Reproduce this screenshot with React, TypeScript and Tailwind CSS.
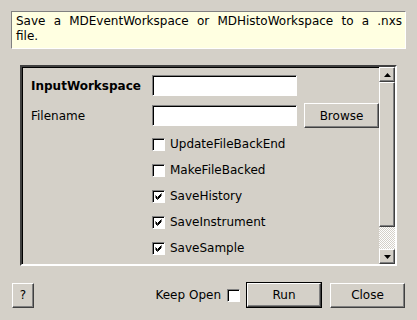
import React from "react";

const raised =
  "border border-t-white border-l-white border-b-[#404040] border-r-[#404040] shadow-[inset_-1px_-1px_#808080] bg-[#d4d0c8]";
const sunken =
  "border border-t-[#808080] border-l-[#808080] border-b-white border-r-white shadow-[inset_1px_1px_#000000]";

function Check({ checked }: { checked?: boolean }) {
  return (
    <div className={`w-[13px] h-[13px] bg-white flex items-center justify-center ${sunken}`}>
      {checked && (
        <svg width="9" height="9" viewBox="0 0 9 9">
          <path d="M1.5 3.5 L3.5 5.5 L7.5 1.5 M1.5 4.5 L3.5 6.5 L7.5 2.5 M1.5 5.5 L3.5 7.5 L7.5 3.5" stroke="#000" strokeWidth="1" fill="none" />
        </svg>
      )}
    </div>
  );
}

function CheckRow({ label, checked }: { label: string; checked?: boolean }) {
  return (
    <div className="h-[26px] flex items-center pl-[121px]">
      <Check checked={checked} />
      <span className="ml-[5px]">{label}</span>
    </div>
  );
}

export default function App() {
  return (
    <div className="w-[417px] h-[320px] bg-[#d4d0c8] flex flex-col font-['DejaVu_Sans',sans-serif] text-[12px] text-black overflow-hidden">
      <div className="mt-[11px] mx-[11px] h-[38px] bg-[#ffffe1] border border-t-[#808080] border-l-[#808080] border-b-white border-r-white pl-[4px] pr-[3px] pt-[2px] leading-[15px]">
        <div className="text-justify [text-align-last:justify]">Save a MDEventWorkspace or MDHistoWorkspace to a .nxs</div>
        <div>file.</div>
      </div>

      <div className="mt-[16px] ml-[20px] w-[377px] h-[201px] border-2 border-t-[#404040] border-l-[#404040] border-b-white border-r-white shadow-[inset_1px_1px_#000000] flex">
        <div className="flex-1 pl-[9px] pt-[8px] flex flex-col">
          <div className="h-[21px] flex items-center">
            <span className="w-[121px] font-bold">InputWorkspace</span>
            <div className={`w-[145px] h-[21px] bg-white ${sunken}`} />
          </div>
          <div className="mt-[7px] h-[25px] flex items-center">
            <span className="w-[121px]">Filename</span>
            <div className={`w-[145px] h-[21px] bg-white ${sunken}`} />
            <div className={`ml-[7px] w-[75px] h-[25px] flex items-center justify-center ${raised}`}>Browse</div>
          </div>
          <div className="mt-[3px]">
            <CheckRow label="UpdateFileBackEnd" />
            <CheckRow label="MakeFileBacked" />
            <CheckRow label="SaveHistory" checked />
            <CheckRow label="SaveInstrument" checked />
            <CheckRow label="SaveSample" checked />
          </div>
        </div>
        <div className="w-[16px] flex flex-col">
          <div className={`h-[15px] flex items-center justify-center ${raised}`}>
            <svg width="7" height="4" viewBox="0 0 7 4"><path d="M3.5 0 L7 4 L0 4 Z" fill="#000" /></svg>
          </div>
          <div className={`h-[145px] ${raised}`} />
          <div className="h-[22px] bg-[repeating-conic-gradient(#ffffff_0_25%,#d4d0c8_0_50%)] bg-[length:2px_2px]" />
          <div className={`h-[15px] flex items-center justify-center ${raised}`}>
            <svg width="7" height="4" viewBox="0 0 7 4"><path d="M0 0 L7 0 L3.5 4 Z" fill="#000" /></svg>
          </div>
        </div>
      </div>

      <div className="mt-[16px] px-[12px] flex items-center">
        <div className={`w-[22px] h-[25px] flex items-center justify-center ${raised}`}>?</div>
        <div className="flex-1" />
        <span>Keep Open</span>
        <div className="ml-[6px]"><Check /></div>
        <div className="ml-[6px] w-[76px] h-[26px] border border-black flex">
          <div className={`flex-1 flex items-center justify-center ${raised}`}>Run</div>
        </div>
        <div className={`ml-[8px] w-[75px] h-[25px] flex items-center justify-center ${raised}`}>Close</div>
      </div>
    </div>
  );
}
